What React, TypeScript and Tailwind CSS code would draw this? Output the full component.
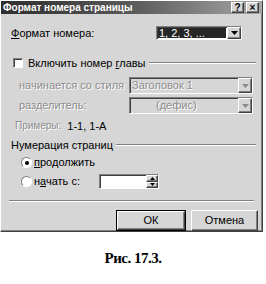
import React from 'react';

// Win9x style "Формат номера страницы" dialog with figure caption

const raised =
  'border border-t-white border-l-white border-r-[#404040] border-b-[#404040] shadow-[inset_-1px_-1px_0_#808080]';
const sunken =
  'border border-t-[#808080] border-l-[#808080] border-r-white border-b-white shadow-[inset_1px_1px_0_#404040]';
const disabledText = 'text-[#8c8c8c] [text-shadow:1px_1px_0_#ffffff]';

const Arrow: React.FC<{ dim?: boolean }> = ({ dim }) => (
  <svg width="7" height="4" viewBox="0 0 7 4">
    <path d="M0 0h7L3.5 4z" fill={dim ? '#8c8c8c' : '#000'} />
  </svg>
);

const ArrowBtn: React.FC<{ dim?: boolean }> = ({ dim }) => (
  <div className={`w-[14px] h-full bg-[#d6d6d6] flex items-center justify-center ${raised}`}>
    <Arrow dim={dim} />
  </div>
);

const Groove: React.FC<{ className?: string }> = ({ className = '' }) => (
  <div className={`h-[2px] border-t border-t-[#808080] border-b border-b-white ${className}`} />
);

const Radio: React.FC<{ checked?: boolean }> = ({ checked }) => (
  <div className="w-[11px] h-[11px] rounded-full bg-white border border-t-[#808080] border-l-[#808080] border-r-white border-b-white flex items-center justify-center">
    {checked && <div className="w-[4px] h-[4px] rounded-full bg-black" />}
  </div>
);

export default function App() {
  return (
    <div className="w-[266px] h-[284px] bg-white flex flex-col font-['Liberation_Sans',Arial,sans-serif] text-[11px] leading-none text-black">
      <div className={`w-[263px] h-[232px] bg-[#d6d6d6] flex flex-col ${raised}`}>
        {/* title bar */}
        <div className="h-[14px] flex items-center justify-between bg-gradient-to-r from-[#2e2e2e] via-[#5a5a5a] to-[#a8a8a8] pl-[2px] pr-[3px]">
          <span className="text-white font-bold text-[10px]">Формат номера страницы</span>
          <div className="flex gap-[2px]">
            <div className={`w-[13px] h-[11px] bg-[#d6d6d6] flex items-center justify-center font-bold text-[10px] ${raised}`}>?</div>
            <div className={`w-[13px] h-[11px] bg-[#d6d6d6] flex items-center justify-center font-bold text-[10px] ${raised}`}>×</div>
          </div>
        </div>

        {/* format */}
        <div className="mt-[12px] h-[14px] flex items-center pl-[10px]">
          <span className="w-[145px]"><u>Ф</u>ормат номера:</span>
          <div className={`w-[86px] h-[14px] bg-white flex ${sunken}`}>
            <div className="flex-1 bg-[#262626] text-white flex items-center pl-[1px] m-[1px]">1, 2, 3, ...</div>
            <ArrowBtn />
          </div>
        </div>

        {/* chapter checkbox */}
        <div className="mt-[18px] h-[10px] flex items-center pl-[12px] pr-[6px]">
          <div className={`w-[10px] h-[10px] bg-white ${sunken}`} />
          <span className="ml-[5px]">Включить номер <u>г</u>лавы</span>
          <Groove className="flex-1 ml-[3px]" />
        </div>

        <div className="mt-[9px] h-[17px] flex items-center pl-[18px]">
          <span className={`w-[110px] ${disabledText}`}>начинается со стиля</span>
          <div className={`w-[124px] h-[17px] flex ${sunken}`}>
            <div className={`flex-1 flex items-center pl-[2px] ${disabledText}`}>Заголовок 1</div>
            <ArrowBtn dim />
          </div>
        </div>

        <div className="mt-[3px] h-[17px] flex items-center pl-[18px]">
          <span className={`w-[110px] ${disabledText}`}>разделитель:</span>
          <div className={`w-[124px] h-[17px] flex ${sunken}`}>
            <div className={`flex-1 flex items-center pl-[26px] ${disabledText}`}>(дефис)</div>
            <ArrowBtn dim />
          </div>
        </div>

        <div className="mt-[7px] h-[10px] flex items-center pl-[14px]">
          <span className={`shrink-0 text-[10px] ${disabledText}`}>Примеры:</span>
          <span className="ml-[6px] shrink-0">1-1, 1-А</span>
        </div>

        {/* page numbering */}
        <div className="mt-[9px] h-[10px] flex items-center pl-[10px] pr-[6px]">
          <span>Нумерация страниц</span>
          <Groove className="flex-1 ml-[3px]" />
        </div>

        <div className="mt-[7px] h-[11px] flex items-center pl-[20px]">
          <Radio checked />
          <span className="ml-[2px]"><u>п</u>родолжить</span>
        </div>

        <div className="mt-[6px] h-[15px] flex items-center pl-[20px]">
          <Radio />
          <span className="ml-[2px] w-[65px]">н<u>а</u>чать с:</span>
          <div className={`w-[60px] h-[15px] bg-white flex justify-end ${sunken}`}>
            <div className="w-[12px] flex flex-col">
              <div className={`flex-1 bg-[#d6d6d6] flex items-center justify-center ${raised}`}>
                <svg width="5" height="3" viewBox="0 0 5 3"><path d="M0 3h5L2.5 0z" fill="#000" /></svg>
              </div>
              <div className={`flex-1 bg-[#d6d6d6] flex items-center justify-center ${raised}`}>
                <svg width="5" height="3" viewBox="0 0 5 3"><path d="M0 0h5L2.5 3z" fill="#000" /></svg>
              </div>
            </div>
          </div>
        </div>

        <Groove className="mt-[11px] mx-[8px]" />

        <div className="mt-[8px] flex justify-end gap-[5px] pr-[4px]">
          <div className="w-[70px] h-[21px] bg-[#d6d6d6] flex items-center justify-center border border-black">
            <div className={`w-full h-full flex items-center justify-center ${raised}`}>ОК</div>
          </div>
          <div className={`w-[67px] h-[21px] bg-[#d6d6d6] flex items-center justify-center ${raised}`}>Отмена</div>
        </div>
      </div>

      <div className="mt-[19px] text-center font-['Liberation_Serif','Times_New_Roman',serif] font-bold text-[15px] tracking-[-0.5px]">
        Рис. 17.3.
      </div>
    </div>
  );
}
